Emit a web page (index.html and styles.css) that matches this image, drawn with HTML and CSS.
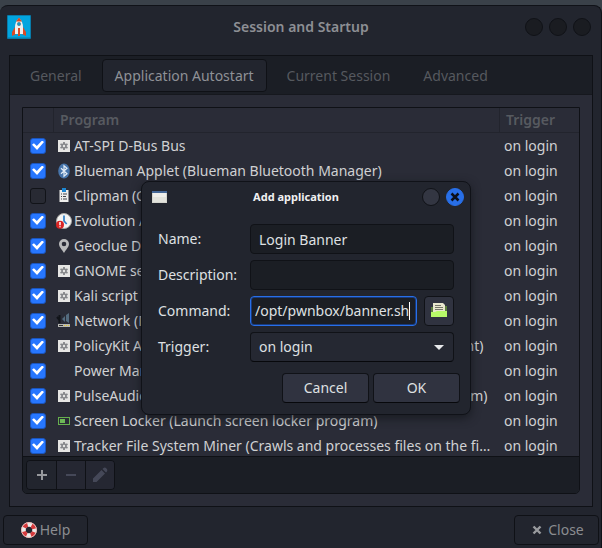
FILE: index.html
```html
<!DOCTYPE html>
<html lang="en">
<head>
<meta charset="utf-8">
<title>Session and Startup</title>
<link rel="stylesheet" href="styles.css">
</head>
<body>
<svg class="defs" aria-hidden="true">
  <symbol id="gear" viewBox="0 0 16 16">
    <rect x="2" y="2" width="12" height="12" fill="#e6e6e4"/>
    <path d="M8 4v8M4.500 6l7 4M11.500 6l-7 4" stroke="#85878a" stroke-width="1.800"/>
    <circle cx="8" cy="8" r="2.700" fill="#85878a"/><circle cx="8" cy="8" r="1.200" fill="#e6e6e4"/>
  </symbol>
  <symbol id="bluetooth" viewBox="0 0 16 16">
    <ellipse cx="8" cy="8" rx="5.800" ry="7.600" fill="#4775ab"/>
    <path d="M5 5.300l6 5.400L8 13.300V2.700l3 2.600-6 5.400" fill="none" stroke="#e4edf6" stroke-width="1.200"/>
  </symbol>
  <symbol id="clipboard" viewBox="0 0 16 16">
    <rect x="3.500" y="2" width="9" height="12" fill="#eeeeec"/><rect x="6" y="0" width="4" height="4" fill="#1c86d1"/>
    <path d="M5 6h1M7 6h4M5 8.500h1M7 8.500h3M5 11h1M7 11h4" stroke="#45474d"/>
  </symbol>
  <symbol id="alarm" viewBox="0 0 16 16">
    <circle cx="8" cy="8" r="7.500" fill="#f4f4f2" stroke="#a9a9a7" stroke-width="1"/>
    <path d="M8 2.500V8l2.700 3" fill="none" stroke="#2d7dc5" stroke-width="1.700"/>
    <circle cx="4" cy="11.700" r="4" fill="#d92525"/><path d="M4 9v3.200M4 13.300v1" stroke="#fff" stroke-width="1.500"/>
  </symbol>
  <symbol id="pin" viewBox="0 0 16 16">
    <path fill-rule="evenodd" d="M8 1a5 5 0 0 0-5 5c0 3 3 5.500 5 9 2-3.500 5-6 5-9a5 5 0 0 0-5-5zm0 2.700a2.300 2.300 0 1 1 0 4.600 2.300 2.300 0 0 1 0-4.600z" fill="#b9babb"/>
  </symbol>
  <symbol id="network" viewBox="0 0 16 16">
    <path d="M3.500 2v8M1 4l2.500 3" stroke="#111419" stroke-width="2"/>
    <path d="M6 6l3-3v6zM10 2l3-2v10l-3-2z" fill="#536b7e"/>
    <rect x="2" y="11" width="12" height="3" fill="#b7b8b4"/><path d="M3 12.500h4" stroke="#333"/><path d="M8 12.500h5" stroke="#e5c52b" stroke-dasharray="1 1"/>
  </symbol>
  <symbol id="screen" viewBox="0 0 16 16">
    <rect x="2.500" y="4.500" width="11" height="7" fill="none" stroke="#66b04e"/><rect x="4" y="6" width="5" height="4" fill="#6db957"/>
  </symbol>
</svg>

<main class="window">
  <header class="titlebar">
    <svg class="app-icon" viewBox="0 0 24 24" aria-hidden="true">
      <rect width="24" height="24" rx="1" fill="#087ba9"/><rect x="1" y="1" width="22" height="21.500" fill="#02a5df"/>
      <path d="M8 12l-3 5v4l4-2zM16 12l3 5v4l-4-2z" fill="#dd4a24"/>
      <path d="M12 3c-3 3-4 6-4 9v7h8v-7c0-3-1-6-4-9z" fill="#eeefee"/>
      <path d="M12 2.500l-3 4h6z" fill="#dd4a24"/><circle cx="12" cy="9" r="1.700" fill="#159bc9" stroke="#4a7180" stroke-width=".5"/>
      <path d="M11 13h2v8h-2z" fill="#dd4a24"/>
    </svg>
    <h1 class="title">Session and Startup</h1>
    <div class="window-buttons">
      <button class="round" aria-label="Minimize"></button>
      <button class="round" aria-label="Maximize"></button>
      <button class="round" aria-label="Close window"></button>
    </div>
  </header>

  <section class="notebook">
    <nav class="tabs" role="tablist">
      <button class="tab" role="tab">General</button>
      <button class="tab selected" role="tab" aria-selected="true">Application Autostart</button>
      <button class="tab" role="tab">Current Session</button>
      <button class="tab" role="tab">Advanced</button>
    </nav>
    <div class="page">
      <div class="list">
        <table class="programs">
          <colgroup><col class="col-check"><col><col class="col-trigger"></colgroup>
          <thead><tr><th></th><th>Program</th><th>Trigger</th></tr></thead>
          <tbody>
            <tr><td><input type="checkbox" id="p1" checked></td><td><label for="p1"><svg class="icon"><use href="#gear"/></svg>AT-SPI D-Bus Bus</label></td><td>on login</td></tr>
            <tr><td><input type="checkbox" id="p2" checked></td><td><label for="p2"><svg class="icon"><use href="#bluetooth"/></svg>Blueman Applet (Blueman Bluetooth Manager)</label></td><td>on login</td></tr>
            <tr><td><input type="checkbox" id="p3"></td><td><label for="p3"><svg class="icon"><use href="#clipboard"/></svg>Clipman (Clipboard manager)</label></td><td>on login</td></tr>
            <tr><td><input type="checkbox" id="p4" checked></td><td><label for="p4"><svg class="icon"><use href="#alarm"/></svg>Evolution Alarm Notify</label></td><td>on login</td></tr>
            <tr><td><input type="checkbox" id="p5" checked></td><td><label for="p5"><svg class="icon"><use href="#pin"/></svg>Geoclue Demo agent</label></td><td>on login</td></tr>
            <tr><td><input type="checkbox" id="p6" checked></td><td><label for="p6"><svg class="icon"><use href="#gear"/></svg>GNOME settings</label></td><td>on login</td></tr>
            <tr><td><input type="checkbox" id="p7" checked></td><td><label for="p7"><svg class="icon"><use href="#gear"/></svg>Kali script</label></td><td>on login</td></tr>
            <tr><td><input type="checkbox" id="p8" checked></td><td><label for="p8"><svg class="icon"><use href="#network"/></svg>Network (Manage your network connections)</label></td><td>on login</td></tr>
            <tr><td><input type="checkbox" id="p9" checked></td><td><label for="p9"><svg class="icon"><use href="#gear"/></svg>PolicyKit Authentication Agent (PolicyKit Authentication Agent)</label></td><td>on login</td></tr>
            <tr><td><input type="checkbox" id="p10" checked></td><td><label for="p10"><svg class="icon"></svg>Power Manager (Power management)</label></td><td>on login</td></tr>
            <tr><td><input type="checkbox" id="p11" checked></td><td><label for="p11"><svg class="icon"><use href="#gear"/></svg>PulseAudio Sound System (Start the PulseAudio Sound System)</label></td><td>on login</td></tr>
            <tr><td><input type="checkbox" id="p12" checked></td><td><label for="p12"><svg class="icon"><use href="#screen"/></svg>Screen Locker (Launch screen locker program)</label></td><td>on login</td></tr>
            <tr><td><input type="checkbox" id="p13" checked></td><td><label for="p13"><svg class="icon"><use href="#gear"/></svg>Tracker File System Miner (Crawls and processes files on the file system)</label></td><td>on login</td></tr>
          </tbody>
        </table>
        <div class="toolbar">
          <div class="tool-group">
            <button class="tool" aria-label="Add"><svg viewBox="0 0 16 16"><path d="M8 3v10M3 8h10" stroke="#96989c" stroke-width="2"/></svg></button>
            <button class="tool" aria-label="Remove" disabled><svg viewBox="0 0 16 16"><path d="M3 8h10" stroke="#454858" stroke-width="2"/></svg></button>
            <button class="tool" aria-label="Edit" disabled><svg viewBox="0 0 16 16"><path d="M1 15v-3.500l8.500-8.500 3.500 3.500L4.500 15zM10.500 2l1-1q1.500-1 3 .5t.5 3l-1 1z" fill="#454858"/></svg></button>
          </div>
        </div>
      </div>
    </div>
  </section>

  <footer class="actions">
    <button class="action">
      <svg viewBox="0 0 16 16" aria-hidden="true"><circle cx="8" cy="8" r="5.500" fill="none" stroke="#ececea" stroke-width="4.500"/><circle cx="8" cy="8" r="5.500" fill="none" stroke="#d5393c" stroke-width="4.500" stroke-dasharray="4.320" stroke-dashoffset="-2.160"/><circle cx="8" cy="8" r="7.500" fill="none" stroke="#e9b7b4" stroke-width="1"/></svg>
      Help
    </button>
    <button class="action close">
      <svg viewBox="0 0 16 16" aria-hidden="true"><path d="M4.500 4.500l7 7M11.500 4.500l-7 7" stroke="#999b9e" stroke-width="2.400"/></svg>
      Close
    </button>
  </footer>
</main>

<form class="dialog" role="dialog" aria-labelledby="dialog-title">
  <header class="dialog-bar">
    <svg class="dialog-icon" viewBox="0 0 15 12" aria-hidden="true"><rect width="15" height="12" fill="#d5d6cf"/><rect width="15" height="2" fill="#456796"/><rect x="1" y="2" width="13" height="9" fill="#eeeeea"/><rect x="1" y="6" width="13" height="5" fill="#e2e3dc"/></svg>
    <h2 class="dialog-title" id="dialog-title">Add application</h2>
    <div class="dialog-buttons">
      <button type="button" class="round light" aria-label="Maximize dialog"></button>
      <button type="button" class="round blue" aria-label="Close dialog"><svg viewBox="0 0 16 16"><path d="M4.500 4.500l7 7M11.500 4.500l-7 7" stroke="#0b101b" stroke-width="2.500"/></svg></button>
    </div>
  </header>
  <div class="fields">
    <label for="name">Name:</label>
    <input class="entry" id="name" type="text" value="Login Banner">
    <label for="description">Description:</label>
    <input class="entry" id="description" type="text">
    <label for="command">Command:</label>
    <div class="command-row">
      <div class="entry focused"><input id="command" type="text" value="/opt/pwnbox/banner.sh"><span class="caret"></span></div>
      <button type="button" class="browse" aria-label="Choose a file"><svg viewBox="0 0 16 16"><path d="M0 4h3v6H0zM13 3h3v7h-3z" fill="#5b7d3d"/><path d="M2 0h10l2 2v8H2z" fill="#e8e7ce"/><path d="M4 2.500h6M4 4.500h8M4 6.500h8" stroke="#747468"/><path d="M0 9h4l2-1h10v6H0z" fill="#b8fb69"/></svg></button>
    </div>
    <label for="trigger">Trigger:</label>
    <div class="select-wrap">
      <select id="trigger"><option>on login</option></select>
      <svg class="arrow" viewBox="0 0 10 5" aria-hidden="true"><path d="M0 0h10L5 5z" fill="#e8e9eb"/></svg>
    </div>
  </div>
  <div class="dialog-actions">
    <button type="button">Cancel</button>
    <button type="submit">OK</button>
  </div>
</form>
</body>
</html>
```
FILE: styles.css
```css
* { box-sizing: border-box; }

body {
  margin: 0;
  min-height: 100vh;
  padding-top: 5px;
  background: #3a4149;
  color: #d0d1d3;
  font: 14px/20px "Noto Sans", sans-serif;
  display: flex;
  flex-direction: column;
  overflow: hidden;
}

button, input, select { font: inherit; color: inherit; margin: 0; padding: 0; }
h1, h2 { margin: 0; }
svg { display: block; flex: none; }
.defs { position: absolute; width: 0; height: 0; }

.window {
  flex: 1;
  display: flex;
  flex-direction: column;
  background: #22252e;
  border: 1px solid #101218;
  border-width: 1px 1px 0 0;
  border-radius: 8px 8px 0 0;
}

.titlebar {
  display: grid;
  grid-template-columns: 76px 1fr 72px;
  align-items: center;
  height: 49px;
  padding: 0 10px 7px 7px;
}
.app-icon { width: 24px; height: 24px; }
.title {
  text-align: center;
  color: #8d8f94;
  font-size: 14px;
  line-height: 20px;
  font-weight: 600;
}
.window-buttons { display: flex; justify-content: flex-end; gap: 6px; }
.round {
  display: grid;
  place-items: center;
  width: 18px;
  height: 18px;
  border: 1px solid #101217;
  border-radius: 50%;
  background: #1a1c21;
}
.round svg { width: 16px; height: 16px; }

.notebook {
  flex: 1;
  display: flex;
  flex-direction: column;
  margin: 0 8px 0 9px;
  border: 1px solid #0f1116;
}
.tabs {
  display: flex;
  gap: 7px;
  height: 39px;
  padding: 3px 7px;
  background: #1b1e25;
  border-bottom: 1px solid #16181e;
}
.tab {
  height: 33px;
  padding: 0 12px;
  border: 1px solid transparent;
  border-radius: 4px;
  background: none;
  color: #56595f;
}
.tab.selected { background: #22252e; border-color: #0f1116; color: #8f9196; }
.page { flex: 1; display: flex; padding: 12px; background: #2a2c37; }

.list {
  flex: 1;
  display: flex;
  flex-direction: column;
  border: 1px solid #0f1116;
  border-radius: 0 0 5px 5px;
  overflow: hidden;
}
.programs { width: 100%; border-spacing: 0; table-layout: fixed; }
.col-check { width: 31px; }
.col-trigger { width: 79px; }
.programs th {
  height: 25px;
  padding: 0 6px;
  text-align: left;
  font-weight: 600;
  color: #575a60;
  border-bottom: 1px solid #22242d;
}
.programs th:not(:last-child) { border-right: 1px solid #22242d; }
.programs td { height: 25px; padding: 0 4px; white-space: nowrap; }
.programs td:first-child { padding: 0 7px; }
.programs td:nth-child(2) { padding: 0 8px 0 2px; overflow: hidden; text-overflow: ellipsis; }
.icon {
  display: inline-block;
  width: 16px;
  height: 16px;
  margin-right: 2px;
  vertical-align: -3px;
}
input[type="checkbox"] {
  appearance: none;
  display: block;
  width: 16px;
  height: 16px;
  border: 1px solid #111318;
  border-radius: 3px;
  background: #282a33;
}
input[type="checkbox"]:checked {
  border-color: #1b55bd;
  background: #2777ff;
  display: grid;
  place-items: center;
}
input[type="checkbox"]:checked::before {
  content: "";
  width: 12px;
  height: 10px;
  background: #ffffff;
  clip-path: polygon(0 42%, 16% 28%, 40% 56%, 84% 0, 100% 14%, 42% 94%);
}

/* The bar covers the lower edge of the last row. */
.toolbar {
  flex: 1;
  margin-top: -2px;
  padding: 3px;
  border-top: 1px solid #0f1116;
  background: #1b1e25;
}
.tool-group { display: flex; width: fit-content; border: 1px solid #0f1116; border-radius: 4px; overflow: hidden; }
.tool {
  display: grid;
  place-items: center;
  width: 29px;
  height: 28px;
  border: 0;
  background: #22252e;
}
.tool + .tool { border-left: 1px solid #0f1116; }
.tool:disabled { background: #252732; }
.tool svg { width: 16px; height: 16px; }

.actions { display: flex; justify-content: space-between; padding: 8px 2px 3px 3px; }
.action {
  display: flex;
  align-items: center;
  justify-content: center;
  gap: 3px;
  width: 85px;
  height: 30px;
  border: 1px solid #0f1116;
  border-radius: 4px;
  background: #22252e;
  color: #8b8d91;
}
.action svg { width: 16px; height: 16px; }

.dialog {
  position: absolute;
  top: 181px;
  left: 141px;
  width: 330px;
  padding: 0 10px 11px 16px;
  background: #22252e;
  border: 1px solid #101218;
  border-radius: 8px;
  box-shadow: 0 3px 10px #14161ccc;
  color: #dfe0e2;
}
.dialog-bar {
  display: grid;
  grid-template-columns: 18px 1fr 42px;
  align-items: center;
  height: 42px;
  padding-bottom: 12px;
  margin: 0 -4px 0 -6px;
}
.dialog-icon { width: 15px; height: 12px; }
.dialog-title { text-align: center; font-size: 11px; line-height: 18px; font-weight: 700; color: #f0f0f1; }
.dialog-buttons { display: flex; justify-content: flex-end; gap: 6px; }
.round.light { background: #333642; }
.round.blue { background: #286fe8; border-color: #286fe8; }

.fields {
  display: grid;
  grid-template-columns: 86px minmax(0, 1fr);
  gap: 6px;
  align-items: center;
  padding-right: 6px;
}
.entry {
  width: 100%;
  min-width: 0;
  height: 30px;
  padding: 0 8px;
  border: 1px solid #101217;
  border-radius: 4px;
  background: #1b1e24;
}
.command-row { display: flex; gap: 7px; }
.focused {
  flex: 1;
  display: flex;
  align-items: center;
  padding: 0 6px 0 4px;
  border: 1px solid #286fe8;
  box-shadow: inset 0 0 0 1px #193a7b;
}
.focused input {
  flex: 1;
  min-width: 0;
  border: 0;
  background: none;
  outline: none;
  text-align: right;
}
.caret { width: 1px; height: 18px; background: #ffffff; }
.browse {
  display: grid;
  place-items: center;
  width: 30px;
  height: 30px;
  border: 1px solid #101217;
  border-radius: 4px;
  background: #303340;
}
.browse svg { width: 16px; height: 16px; }
.select-wrap { display: grid; align-items: center; }
.select-wrap > * { grid-area: 1 / 1; }
.select-wrap select {
  appearance: none;
  width: 100%;
  height: 30px;
  padding: 0 8px;
  border: 1px solid #101217;
  border-bottom-color: #07080b;
  border-radius: 4px;
  background: #252832;
}
.arrow { width: 10px; height: 5px; justify-self: end; margin-right: 10px; pointer-events: none; }

.dialog-actions { display: flex; justify-content: flex-end; gap: 4px; margin-top: 11px; }
.dialog-actions button {
  width: 87px;
  height: 30px;
  border: 1px solid #101217;
  border-bottom-color: #07080b;
  border-radius: 4px;
  background: #303340;
}
```
